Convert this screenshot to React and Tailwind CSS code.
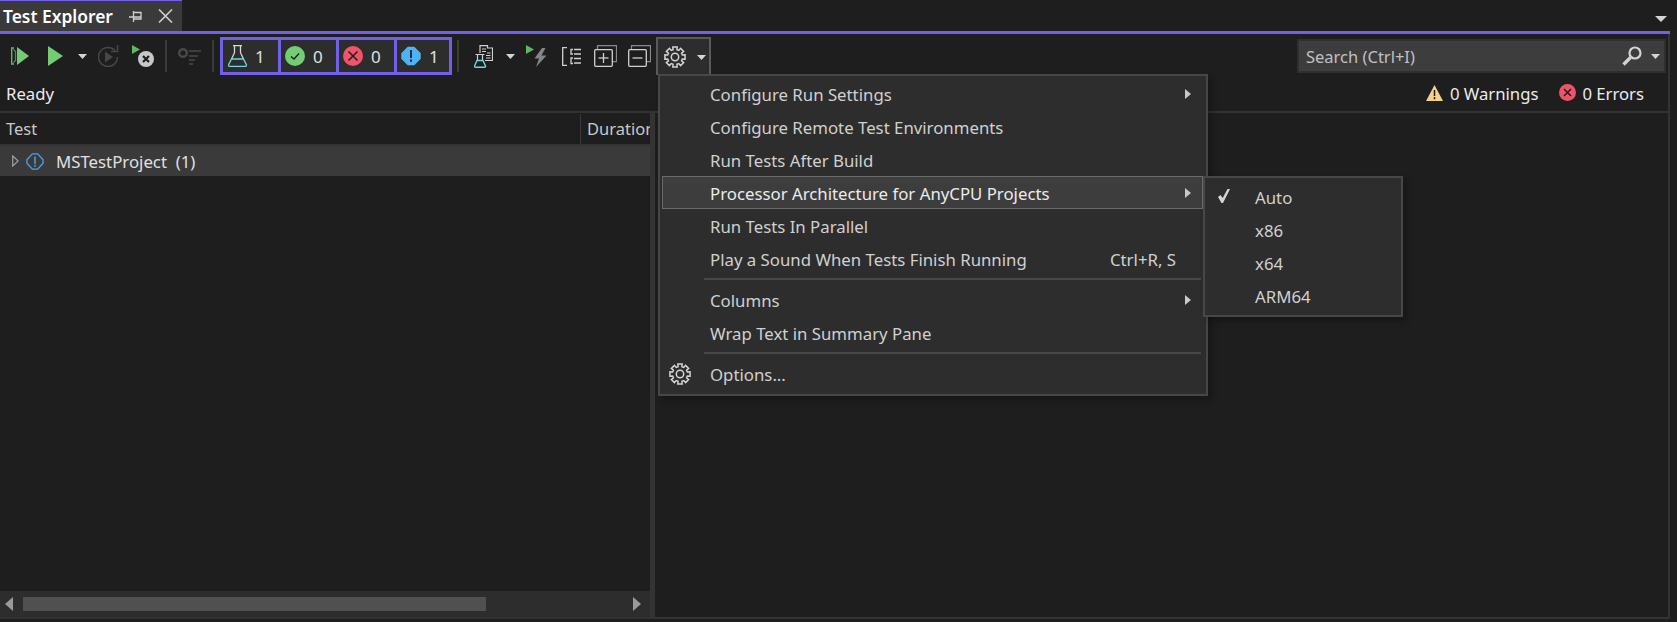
import React from "react";

const font = { fontFamily: '"Noto Sans", sans-serif' };

const Caret = ({ className = "" }) => (
  <svg width="9" height="5" viewBox="0 0 9 5" className={`shrink-0 ${className}`}>
    <path d="M0 0h9L4.5 5z" fill="#d4d4d4" />
  </svg>
);

const ArrowRight = () => (
  <svg width="6" height="10" viewBox="0 0 6 10">
    <path d="M0 0l6 5-6 5z" fill="#c8c8c8" />
  </svg>
);

// 8 tooth gear like the VS settings icon
const gearPath = () => {
  let d = "";
  for (let i = 0; i < 8; i++) {
    const a = (i * Math.PI) / 4;
    const pts = [
      [7.6, a - 0.26],
      [10.3, a - 0.21],
      [10.3, a + 0.21],
      [7.6, a + 0.26],
    ];
    pts.forEach(([r, t], j) => {
      const x = (11 + r * Math.sin(t)).toFixed(2);
      const y = (11 - r * Math.cos(t)).toFixed(2);
      d += `${i === 0 && j === 0 ? "M" : "L"}${x} ${y}`;
    });
  }
  return d + "z";
};

const Gear = () => (
  <svg width="22" height="22" viewBox="0 0 22 22" fill="none" stroke="#d4d4d4" strokeWidth="1.5" strokeLinejoin="miter" className="shrink-0">
    <path d={gearPath()} />
    <circle cx="11" cy="11" r="3.7" />
  </svg>
);

const RunAll = () => (
  <svg width="18" height="18" viewBox="0 0 18 18" fill="none" className="shrink-0">
    <path d="M3 1H.7v16H3" stroke="#5fb760" strokeWidth="1.4" />
    <path d="M2.500 2.500l2 2v9l-2 2" stroke="#4b8f4c" strokeWidth="1.2" />
    <path d="M6 0l12 9-12 9z" fill="#74cd74" />
  </svg>
);

const Run = () => (
  <svg width="15" height="20" viewBox="0 0 15 20" className="shrink-0">
    <path d="M0 0l15 10L0 20z" fill="#74cd74" />
  </svg>
);

const RepeatLast = () => (
  <svg width="21" height="22" viewBox="0 0 21 22" fill="none" className="shrink-0">
    <path d="M17 5.500A9.500 9.500 0 1 0 19.500 12" stroke="#474747" strokeWidth="1.5" />
    <path d="M19.500 0v6.500H13" stroke="#474747" strokeWidth="1.5" />
    <path d="M7 6.500l8 5.500-8 5.500z" fill="#474747" />
  </svg>
);

const RunFailed = () => (
  <svg width="22" height="22" viewBox="0 0 22 22" className="shrink-0">
    <path d="M0 0l8 4.500L0 9z" fill="#5fb760" />
    <circle cx="14" cy="14" r="8" fill="#c8c8c8" />
    <path d="M11 11l6 6M17 11l-6 6" stroke="#1e1e1e" strokeWidth="2.200" />
  </svg>
);

const GroupBy = () => (
  <svg width="23" height="17" viewBox="0 0 23 17" fill="none" className="shrink-0">
    <circle cx="5" cy="5" r="3.800" stroke="#4a4a4a" strokeWidth="2.400" />
    <path d="M11 3h12M11 8h9M11 12h6M11 16h4" stroke="#4a4a4a" strokeWidth="1.500" />
  </svg>
);

const Flask = () => (
  <svg width="19" height="22" viewBox="0 0 19 22" fill="none" className="shrink-0">
    <path d="M5 .7h9M6.500 .7v7L3.500 14M12.500 .7v7l3 6.300" stroke="#d6d6d6" strokeWidth="1.300" />
    <path d="M3.500 14h12l3 6c.3.700-.2 1.300-1 1.300H1.500c-.8 0-1.300-.6-1-1.300z" stroke="#6fd8d8" strokeWidth="1.300" />
  </svg>
);

const PassedIcon = () => (
  <svg width="20" height="20" viewBox="0 0 20 20">
    <circle cx="10" cy="10" r="10" fill="#74cd74" />
    <path d="M6 10.500l3 2.500 5-5.500" fill="none" stroke="#1e1e1e" strokeWidth="1.300" />
  </svg>
);

const FailedIcon = () => (
  <svg width="20" height="20" viewBox="0 0 20 20">
    <circle cx="10" cy="10" r="10" fill="#f0546a" />
    <path d="M5.500 5.500l9 9M14.500 5.500l-9 9" stroke="#1e1e1e" strokeWidth="1.500" />
  </svg>
);

const NotRunIcon = () => (
  <svg width="20" height="20" viewBox="0 0 20 20">
    <path d="M7 1.500h6l6 6v5l-6 6H7l-6-6v-5z" fill="#4fb2f5" stroke="#4fb2f5" strokeLinejoin="round" strokeWidth="1.500" />
    <path d="M10 4v8M10 13.500v2.200" stroke="#1e1e1e" strokeWidth="1.800" />
  </svg>
);

const PlaylistRun = () => (
  <svg width="19" height="23" viewBox="0 0 19 23" fill="none" className="shrink-0">
    <path d="M6 8V.7h7.500V3h5v12.500H11" stroke="#d0d0d0" strokeWidth="1.200" />
    <path d="M8 4h4M8 6.500h4M13 8h3.500M12 10.500h4.500M12 13h4.500" stroke="#d0d0d0" strokeWidth="1.100" />
    <path d="M1.500 9.500h9M3.500 9.500V15M8.500 9.500V15" stroke="#d0d0d0" strokeWidth="1.200" />
    <path d="M3 15.500h6l2.500 5.500c.3.700-.2 1.300-1 1.300h-9c-.8 0-1.300-.6-1-1.300z" stroke="#6fd8d8" strokeWidth="1.400" />
  </svg>
);

const RunBolt = () => (
  <svg width="22" height="22" viewBox="0 0 22 22" className="shrink-0">
    <path d="M0 0l8 4.500L0 9z" fill="#5fb760" />
    <path d="M16 3L8.500 13.500h4.500L10 22l10.500-11.500h-5L19.500 3z" fill="#858585" />
  </svg>
);

const Hierarchy = () => (
  <svg width="19" height="19" viewBox="0 0 19 19" fill="none" stroke="#d0d0d0" strokeWidth="1.300" className="shrink-0">
    <path d="M5 .7H.7v17.600H5" />
    <path d="M11 2.500H9V7h2M11 11H9v5.500h2" />
    <path d="M12 2.500h7M12 7h7M12 11.500h7M12 16h7" />
  </svg>
);

const ExpandAll = ({ minus }) => (
  <svg width="23" height="22" viewBox="0 0 23 22" fill="none" className="shrink-0">
    <path d="M3.500 4V.7h19v16H19" stroke="#8a8a8a" strokeWidth="1.200" />
    <rect x=".7" y="4.700" width="17.600" height="16.600" rx="1" stroke="#d0d0d0" strokeWidth="1.300" />
    <path d="M4.500 13h10" stroke="#d0d0d0" strokeWidth="1.300" />
    {!minus && <path d="M9.500 8v10" stroke="#d0d0d0" strokeWidth="1.300" />}
  </svg>
);

const Divider = ({ className = "" }) => <div className={`h-[32px] w-[2px] shrink-0 bg-[#3a3a3a] ${className}`} />;

const ToggleButton = ({ icon, count }) => (
  <div className="flex h-[38px] w-[58px] items-center gap-[8px] border-[3px] border-r-0 border-[#7160e8] bg-[#2d2d2d] pl-[4px] text-[17px] text-[#e0e0e0] last:border-r-[3px]">
    <span className="flex w-[20px] shrink-0 justify-center">{icon}</span>
    <span className="pt-[2px]">{count}</span>
  </div>
);

const MenuItem = ({ label, right, arrow, active, icon }) => (
  <div className={`relative flex h-[33px] items-center border pl-[47px] pr-[11px] text-[16.8px] ${active ? "border-[#6a6a6a] bg-[#3d3d3d] text-[#ebebeb]" : "border-transparent text-[#d0d0d0]"}`}>
    {icon && <span className="absolute left-[6px] top-[5px]">{icon}</span>}
    <span className="flex-1 pt-[3px]">{label}</span>
    {right && <span className="mr-[15px] pt-[3px]">{right}</span>}
    {arrow && <ArrowRight />}
  </div>
);

const MenuSep = () => <div className="my-[3px] ml-[42px] mr-[2px] h-[2px] bg-[#464646]" />;

export default function App() {
  return (
    <div style={font} className="relative h-[622px] w-[1677px] overflow-hidden bg-[#1e1e1e] text-[#d6d6d6]">
      {/* tab strip */}
      <div className="flex h-[31px] items-end justify-between">
        <div className="flex h-[31px] w-[182px] items-center border-t border-[#7160e8] bg-[#3a3a3a] pl-[3px]">
          <span className="text-[17.4px] font-semibold text-white">Test Explorer</span>
          <svg width="13" height="11" viewBox="0 0 13 11" fill="none" stroke="#d0d0d0" strokeWidth="1.300" className="ml-[16px]">
            <path d="M0 6h4.500M4.500 0v11M4.500 1.500H12V8H4.500M4.500 6H12" />
          </svg>
          <svg width="15" height="14" viewBox="0 0 15 14" fill="none" stroke="#d0d0d0" strokeWidth="1.600" className="ml-[16px]">
            <path d="M1 .5l13 13M14 .5l-13 13" />
          </svg>
        </div>
        <svg width="12" height="6" viewBox="0 0 12 6" className="mb-[9px] mr-[10px]">
          <path d="M0 0h12L6 6z" fill="#d4d4d4" />
        </svg>
      </div>

      <div className="w-[1670px]">
        <div className="h-[3px] bg-[#7160e8]" />
        <div className="flex h-[585px] flex-col border-r-2 border-[#333333]">
          {/* toolbar */}
          <div className="flex h-[41px] shrink-0 items-center pl-[11px] pt-[3px]">
            <RunAll />
            <div className="ml-[19px]"><Run /></div>
            <Caret className="ml-[15px]" />
            <div className="ml-[11px]"><RepeatLast /></div>
            <div className="ml-[13px]"><RunFailed /></div>
            <Divider className="ml-[11px]" />
            <div className="ml-[11px]"><GroupBy /></div>
            <Divider className="ml-[11px]" />
            <div className="ml-[6px] flex">
              <ToggleButton icon={<Flask />} count="1" />
              <ToggleButton icon={<PassedIcon />} count="0" />
              <ToggleButton icon={<FailedIcon />} count="0" />
              <ToggleButton icon={<NotRunIcon />} count="1" />
            </div>
            <Divider className="ml-[5px]" />
            <div className="ml-[15px]"><PlaylistRun /></div>
            <Caret className="ml-[13px]" />
            <div className="ml-[11px]"><RunBolt /></div>
            <div className="ml-[14px]"><Hierarchy /></div>
            <div className="ml-[13px]"><ExpandAll /></div>
            <div className="ml-[11px]"><ExpandAll minus /></div>
            <div className="ml-[5px] flex h-[38px] w-[55px] shrink-0 items-center gap-[11px] border-[2px] border-b-0 border-[#5a5a5a] bg-[#2d2d2d] pl-[6px]">
              <Gear />
              <Caret />
            </div>
            <div className="ml-auto mr-[2px] flex h-[34px] w-[369px] items-center border-[2px] border-[#2f2f2f] bg-[#3d3d3d] pl-[7px] pr-[4px] text-[16.5px] text-[#c0c0c0]">
              <span className="flex-1 pt-[2px]">Search (Ctrl+I)</span>
              <svg width="20" height="20" viewBox="0 0 20 20" fill="none">
                <circle cx="13" cy="7" r="5.500" stroke="#d4d4d4" strokeWidth="2.200" />
                <path d="M8.500 11.500L1.500 18.500" stroke="#d4d4d4" strokeWidth="3.400" />
              </svg>
              <Caret className="ml-[9px]" />
            </div>
          </div>

          {/* status */}
          <div className="flex h-[38px] shrink-0 items-center justify-between border-b-2 border-[#333333] pl-[6px] pr-[24px] text-[16.7px] text-[#ebebeb]">
            <span className="pt-[2px]">Ready</span>
            <div className="flex items-center">
              <svg width="17" height="16" viewBox="0 0 17 16">
                <path d="M8.500 0L17 16H0z" fill="#f4d28c" />
                <path d="M8.500 5v6M8.500 12v2.200" stroke="#1e1e1e" strokeWidth="1.500" />
              </svg>
              <span className="ml-[7px] pt-[2px]">0 Warnings</span>
              <svg width="17" height="17" viewBox="0 0 17 17" className="ml-[21px]">
                <circle cx="8.500" cy="8.500" r="8.500" fill="#f0546a" />
                <path d="M5 5l7 7M12 5l-7 7" stroke="#1e1e1e" strokeWidth="1.500" />
              </svg>
              <span className="ml-[6px] pt-[2px]">0 Errors</span>
            </div>
          </div>

          {/* panes */}
          <div className="flex min-h-0 flex-1 border-b-2 border-[#333333]">
            <div className="flex w-[650px] flex-col">
              <div className="flex h-[33px] shrink-0 items-center overflow-hidden border-b-2 border-[#333333] text-[16.5px] text-[#c8c8c8]">
                <span className="w-[580px] shrink-0 pl-[6px] pt-[2px]">Test</span>
                <span className="h-[30px] w-px shrink-0 bg-[#3a3a3a]" />
                <span className="overflow-hidden whitespace-nowrap pl-[6px] pt-[2px]">Duration</span>
              </div>
              <div className="flex h-[30px] shrink-0 items-center bg-[#3a3a3a] pl-[12px] text-[16.8px] text-[#e0e0e0]">
                <svg width="7" height="12" viewBox="0 0 7 12" fill="none">
                  <path d="M.7 1l5.500 5-5.500 5z" stroke="#a0a0a0" strokeWidth="1.200" />
                </svg>
                <svg width="18" height="17" viewBox="0 0 20 19" className="ml-[7px]" fill="none">
                  <path d="M7 1h6l6 6.500v4L13 18H7l-6-6.500v-4z" stroke="#4f9fe0" strokeWidth="1.500" strokeLinejoin="round" />
                  <path d="M10 4v8M10 13v2.500" stroke="#4f9fe0" strokeWidth="1.700" />
                </svg>
                <span className="ml-[12px] pt-[2px]">MSTestProject&nbsp; (1)</span>
              </div>
              <div className="flex-1" />
              <div className="flex h-[26px] shrink-0 items-center bg-[#2d2d2d] pl-[5px] pr-[9px]">
                <svg width="8" height="14" viewBox="0 0 8 14"><path d="M8 0v14L0 7z" fill="#9a9a9a" /></svg>
                <div className="ml-[10px] h-[14px] w-[463px] bg-[#505050]" />
                <svg width="8" height="14" viewBox="0 0 8 14" className="ml-auto"><path d="M0 0v14l8-7z" fill="#9a9a9a" /></svg>
              </div>
            </div>
            <div className="w-[5px] bg-[#333333]" />
          </div>
        </div>
      </div>

      {/* settings menu */}
      <div className="absolute left-[658px] top-[74px] w-[550px] border-2 border-[#474747] bg-[#2d2d2d] pb-[4px] pl-[2px] pr-[3px] pt-[1px] shadow-[4px_4px_6px_rgba(0,0,0,0.25)]">
        <MenuItem label="Configure Run Settings" arrow />
        <MenuItem label="Configure Remote Test Environments" />
        <MenuItem label="Run Tests After Build" />
        <MenuItem label="Processor Architecture for AnyCPU Projects" arrow active />
        <MenuItem label="Run Tests In Parallel" />
        <MenuItem label="Play a Sound When Tests Finish Running" right="Ctrl+R, S" />
        <MenuSep />
        <MenuItem label="Columns" arrow />
        <MenuItem label="Wrap Text in Summary Pane" />
        <MenuSep />
        <MenuItem label="Options..." icon={<Gear />} />
      </div>

      {/* submenu */}
      <div className="absolute left-[1203px] top-[176px] w-[200px] border-2 border-[#474747] bg-[#2d2d2d] pb-[3px] pt-[2px] shadow-[4px_4px_6px_rgba(0,0,0,0.25)]">
        {["Auto", "x86", "x64", "ARM64"].map((label, i) => (
          <div key={label} className="relative flex h-[33px] items-center pl-[50px] pt-[3px] text-[16.8px] text-[#d0d0d0]">
            {i === 0 && (
              <svg width="12" height="14" viewBox="0 0 12 14" className="absolute left-[13px] top-[9px]">
                <path d="M0 8l2.500-2 2.200 3L9.500 0H12L5 14H3.500z" fill="#d4d4d4" />
              </svg>
            )}
            {label}
          </div>
        ))}
      </div>
    </div>
  );
}
